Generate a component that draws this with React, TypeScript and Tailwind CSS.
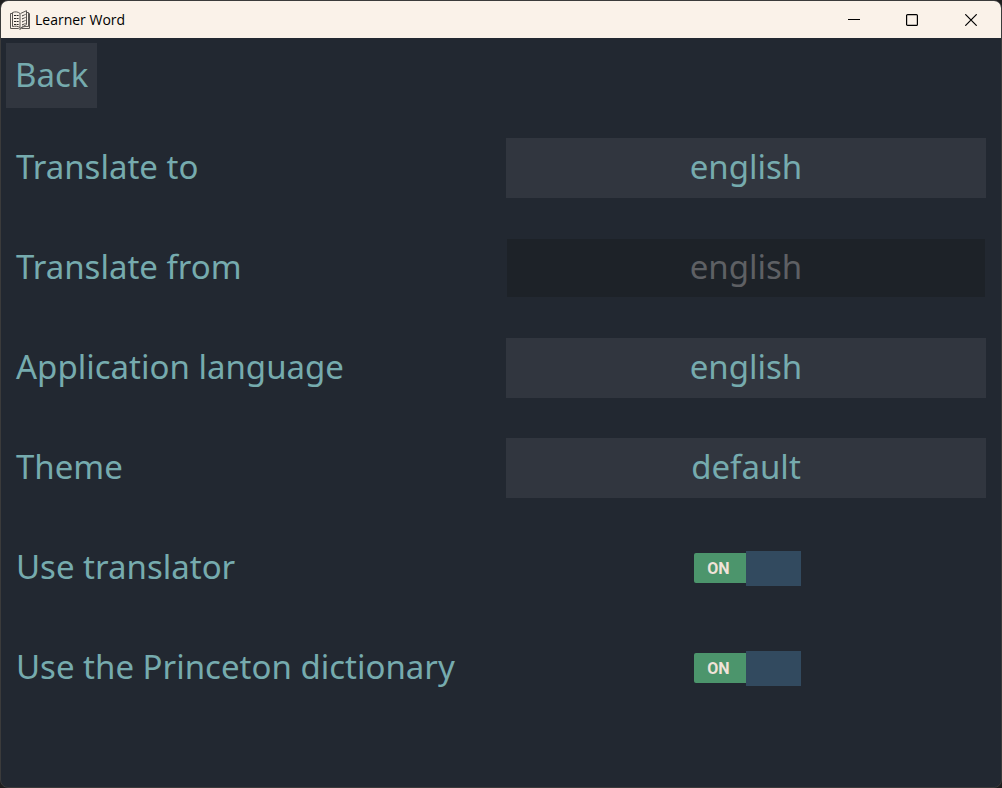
import { useState } from "react";

type SelectRow = { id: string; label: string; options: string[]; disabled?: boolean };

const selectRows: SelectRow[] = [
  { id: "translate-to", label: "Translate to", options: ["english"] },
  { id: "translate-from", label: "Translate from", options: ["english"], disabled: true },
  { id: "app-language", label: "Application language", options: ["english"] },
  { id: "theme", label: "Theme", options: ["default"] },
];

const toggleRows = [
  { id: "use-translator", label: "Use translator" },
  { id: "use-princeton", label: "Use the Princeton dictionary" },
];

function BookIcon() {
  return (
    <svg width="20" height="20" viewBox="0 0 20 20" fill="none" stroke="#5a5652" aria-hidden="true">
      <path d="M2.500 16.500V2.500C5 1.500 8 1.500 10 3.500V17.500C8 16 5 16 2.500 16.500Z" />
      <path d="M10.500 3.500L16.500 0.700V14.500L10.500 18" />
      <path d="M16.500 2.500H18.500V16.500C15 16 12 17 10 18.500" />
      <path d="M2.500 3.500H0.500V18.500H8.500L10 19.300L11.500 18.500H19.500V3.500H18.500" />
      <g stroke="#2b2927">
        <path d="M4 5.500H9M4 8.500H9M4 11.500H9M4 14.500H9" strokeDasharray="2 0.600" />
        <path d="M12 6L15.500 4.400M12 9L15.500 7.400M12 12L15.500 10.400M12 15L15.500 13.400" strokeDasharray="2 0.600" />
      </g>
    </svg>
  );
}

function TitleBar() {
  return (
    <header className="flex h-[37px] items-center bg-[#faf2e9] pl-[9px] text-black">
      <BookIcon />
      <h1 className="ml-[5px] flex-1 font-['Open_Sans','Noto_Sans',sans-serif] text-sm">Learner Word</h1>
      <div className="flex h-full pr-px">
        <button aria-label="Minimize" className="flex w-[58px] items-center justify-center">
          <svg width="12" height="12" viewBox="0 0 12 12" stroke="#000" fill="none"><path d="M0 5.500H12" /></svg>
        </button>
        <button aria-label="Maximize" className="flex w-[58px] items-center justify-center">
          <svg width="12" height="12" viewBox="0 0 12 12" stroke="#000" fill="none" strokeWidth="1.200"><rect x="0.600" y="0.600" width="10.800" height="10.800" rx="1" /></svg>
        </button>
        <button aria-label="Close" className="flex w-[59px] items-center justify-center">
          <svg width="12" height="12" viewBox="0 0 12 12" stroke="#000" fill="none" strokeWidth="1.200"><path d="M0.300 0.300L11.700 11.700M11.700 0.300L0.300 11.700" /></svg>
        </button>
      </div>
    </header>
  );
}

function Toggle({ id }: { id: string }) {
  const [on, setOn] = useState(true);
  return (
    <label htmlFor={id} className={on ? "relative ml-0.5 flex cursor-pointer items-center" : "relative ml-0.5 flex cursor-pointer flex-row-reverse items-center"}>
      <input id={id} type="checkbox" checked={on} onChange={() => setOn(!on)} className="sr-only" />
      <span className={on
        ? "flex h-[30px] w-[52px] items-center justify-center rounded-l-xs bg-[#4c956c] pt-0.5 pr-0.5 font-['Roboto',sans-serif] text-base font-bold text-[#f1e3d8]"
        : "flex h-[30px] w-[52px] items-center justify-center rounded-r-xs bg-[#555b66] pt-0.5 pl-0.5 font-['Roboto',sans-serif] text-base font-bold text-[#f1e3d8]"}>
        {on ? "ON" : "OFF"}
      </span>
      <span className="h-[35px] w-[55px] bg-[#324a5f]" />
    </label>
  );
}

export default function App() {
  return (
    <div className="min-h-screen bg-[#1e1e1e]">
      <div className="flex min-h-screen flex-col overflow-hidden rounded-lg border border-[#3b3b3b] bg-[#222831] font-['Noto_Sans',sans-serif] text-[33px] text-[#76abae]">
        <TitleBar />
        <main>
          <button className="m-[5px] h-[65px] bg-[#31363f] px-[9px] pb-0.5">Back</button>
          <form className="px-[15px] pt-[5px]">
            {selectRows.map((row) => (
              <div key={row.id} className="grid h-[100px] grid-cols-2 items-center gap-2.5">
                <label htmlFor={row.id} className="pb-0.5 whitespace-nowrap">{row.label}</label>
                <select
                  id={row.id}
                  disabled={row.disabled}
                  className="h-[60px] w-full appearance-none bg-[#31363f] pb-0.5 text-center opacity-100 disabled:border disabled:border-[#222831] disabled:bg-[#1d2228] disabled:text-[#5e6064]"
                >
                  {row.options.map((option) => (
                    <option key={option}>{option}</option>
                  ))}
                </select>
              </div>
            ))}
            {toggleRows.map((row) => (
              <div key={row.id} className="grid h-[100px] grid-cols-2 items-center gap-2.5">
                <label htmlFor={row.id} className="pb-0.5 whitespace-nowrap">{row.label}</label>
                <div className="flex justify-center">
                  <Toggle id={row.id} />
                </div>
              </div>
            ))}
          </form>
        </main>
      </div>
    </div>
  );
}
